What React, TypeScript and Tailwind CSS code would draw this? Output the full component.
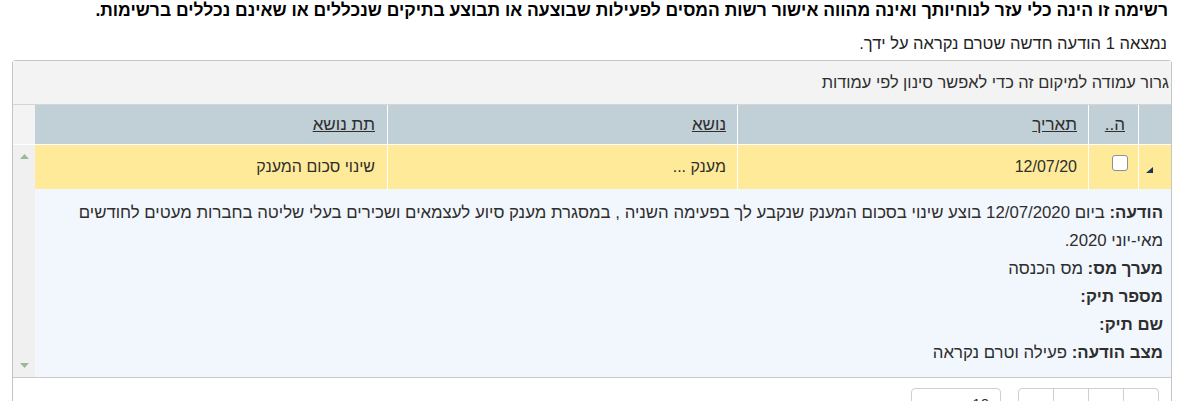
import React from "react";

const Collapse = () => (
  <svg width="7" height="6" viewBox="0 0 7 6">
    <polygon points="7,0 7,6 0,6" fill="#1b3556" />
  </svg>
);

const TriUp = () => (
  <svg width="9" height="5" viewBox="0 0 9 5">
    <polygon points="4.5,0 9,5 0,5" fill="#9bb89f" />
  </svg>
);

const TriDown = () => (
  <svg width="9" height="5" viewBox="0 0 9 5">
    <polygon points="0,0 9,0 4.5,5" fill="#9bb89f" />
  </svg>
);

// pager arrows, drawn small; they sit below the fold
const PagerIcon = ({ d }: { d: string }) => (
  <svg width="10" height="10" viewBox="0 0 10 10">
    <path d={d} fill="#555" />
  </svg>
);

const details = [
  { label: "מערך מס:", value: "מס הכנסה" },
  { label: "מספר תיק:", value: "" },
  { label: "שם תיק:", value: "" },
  { label: "מצב הודעה:", value: "פעילה וטרם נקראה" },
];

export default function App() {
  return (
    <div
      dir="rtl"
      className="h-[401px] overflow-hidden bg-white font-['Liberation_Sans',Arial,sans-serif] text-[#2e2e2e]"
    >
      {/* disclaimer */}
      <p className="px-[12px] text-[17.5px] font-bold leading-[20px] text-black">
        רשימה זו הינה כלי עזר לנוחיותך ואינה מהווה אישור רשות המסים לפעילות שבוצעה או תבוצע בתיקים שנכללים או שאינם נכללים ברשימות.
      </p>
      <p className="mt-[13px] px-[13px] text-[16.5px] leading-[20px] text-[#222]">
        נמצאה 1 הודעה חדשה שטרם נקראה על ידך.
      </p>

      {/* grid */}
      <div className="mt-[7px] ml-[12px] mr-[8px] rounded-t-[4px] border border-b-0 border-[#c5c5c5]">
        <div className="flex h-[44px] items-center border-b border-[#d5d5d5] bg-[#f3f3f3] pr-[2px] text-[16.4px] text-[#2e2e2e]">
          גרור עמודה למיקום זה כדי לאפשר סינון לפי עמודות
        </div>

        {/* header */}
        <div className="flex h-[40px] border-b border-white text-[17px]">
          <div className="w-[33px] border-l border-white bg-[#c1cfd6]" />
          <div className="flex w-[50px] items-center border-l border-white bg-[#c1cfd6] pr-[13px]">
            <span className="underline">ה..</span>
          </div>
          <div className="flex w-[351px] items-center border-l border-white bg-[#c1cfd6] pr-[11px]">
            <span className="underline">תאריך</span>
          </div>
          <div className="flex w-[350px] items-center border-l border-white bg-[#c1cfd6] pr-[11px]">
            <span className="underline">נושא</span>
          </div>
          <div className="flex flex-1 items-center bg-[#c1cfd6] pr-[12px]">
            <span className="underline">תת נושא</span>
          </div>
          <div className="w-[22px] bg-[#f3f3f3]" />
        </div>

        {/* body */}
        <div className="flex border-b border-[#c8c8c8]">
          <div className="flex-1">
            <div className="flex h-[44px] bg-[#ffea99] text-[16px]">
              <div className="flex w-[33px] items-center border-l border-white pr-[18px] pt-[5px]">
                <Collapse />
              </div>
              <div className="w-[50px] border-l border-white pr-[10px] pt-[10px]">
                <div className="h-[16px] w-[16px] rounded-[3px] border border-[#8f8f8f] bg-white" />
              </div>
              <div className="flex w-[351px] items-center border-l border-white pr-[11px]">12/07/20</div>
              <div className="flex w-[350px] items-center border-l border-white pr-[11px]">מענק ...</div>
              <div className="flex flex-1 items-center pr-[12px]">שינוי סכום המענק</div>
            </div>

            <div className="h-[188px] bg-[#f2f7fd] py-[10px] pr-[8px] pl-[10px] text-[16.8px] leading-[28px]">
              <p>
                <b>הודעה:</b> ביום 12/07/2020 בוצע שינוי בסכום המענק שנקבע לך בפעימה השניה , במסגרת מענק סיוע לעצמאים ושכירים בעלי שליטה בחברות מעטים לחודשים מאי-יוני 2020.
              </p>
              {details.map((d) => (
                <p key={d.label}>
                  <b>{d.label}</b> {d.value}
                </p>
              ))}
            </div>
          </div>

          {/* scrollbar */}
          <div className="flex w-[22px] flex-col items-center justify-between bg-[#f0f0f0] py-[9px]">
            <TriUp />
            <TriDown />
          </div>
        </div>

        {/* pager */}
        <div className="flex items-start pt-[10px] pr-[12px] pl-[40px] text-[15px]">
          <div className="flex h-[32px] overflow-hidden rounded-[4px] border border-[#cfcfcf]">
            <div className="flex w-[35px] items-center justify-center border-l border-[#cfcfcf] pt-[8px]">
              <PagerIcon d="M8 1h1.5v8H8zM7 5 1 1v8z" />
            </div>
            <div className="flex w-[35px] items-center justify-center border-l border-[#cfcfcf] pt-[8px]">
              <PagerIcon d="M8 5 2 1v8z" />
            </div>
            <div className="flex w-[35px] items-center justify-center border-l border-[#cfcfcf] pt-[8px]">
              <PagerIcon d="M2 5l6-4v8z" />
            </div>
            <div className="flex w-[34px] items-center justify-center pt-[8px]">
              <PagerIcon d="M0.5 1H2v8H0.5zM3 5l6-4v8z" />
            </div>
          </div>
          <div className="mr-[17px] flex h-[32px] w-[90px] items-center justify-between rounded-[4px] border border-[#cfcfcf] pr-[11px] pl-[10px]">
            <span>10</span>
            <span className="pt-[8px]">
              <PagerIcon d="M1 3h8L5 8z" />
            </span>
          </div>
          <div className="mr-auto flex h-[32px] items-center pt-[6px] text-[#1b3556]">1 - 1 מתוך 1 פריטים</div>
        </div>
      </div>
    </div>
  );
}
